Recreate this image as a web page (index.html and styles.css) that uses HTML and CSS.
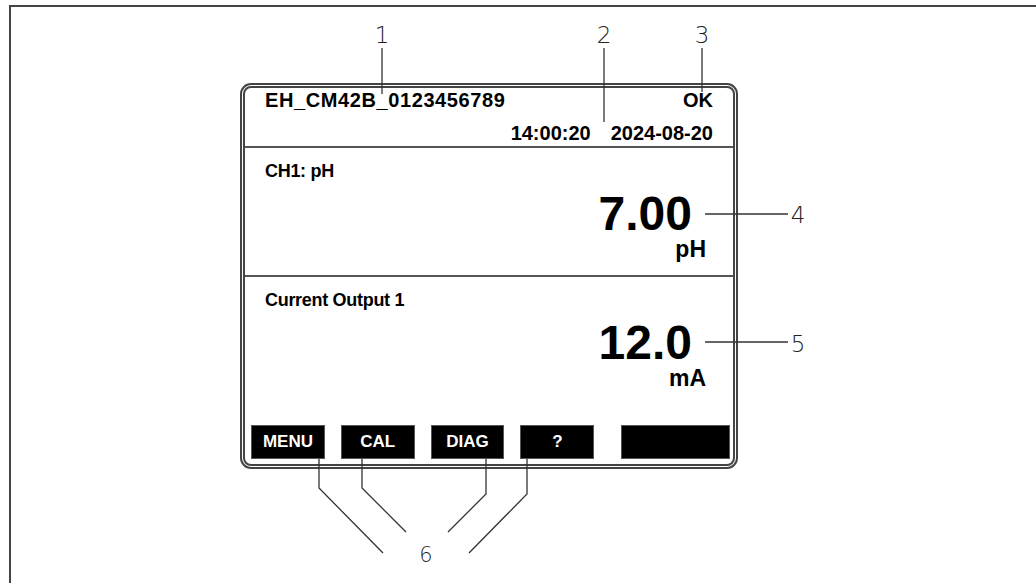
FILE: index.html
```html
<!DOCTYPE html>
<html lang="en">
<head>
    <meta charset="UTF-8">
    <title>Display overview</title>
    <link rel="stylesheet" href="styles.css">
</head>
<body>

    <div class="sheet">
        <div class="display">
            <div class="display-head">
                <div class="head-row">
                    <span class="device-tag">EH_CM42B_0123456789</span>
                    <span>OK</span>
                </div>
                <div class="head-row head-time">
                    <span>14:00:20</span>
                    <span>2024-08-20</span>
                </div>
            </div>

            <div class="channel">
                <div class="channel-title">CH1: pH</div>
                <div class="channel-value">7.00</div>
                <div class="channel-unit">pH</div>
            </div>

            <div class="channel channel-last">
                <div class="channel-title">Current Output 1</div>
                <div class="channel-value">12.0</div>
                <div class="channel-unit">mA</div>
            </div>

            <div class="softkeys">
                <div class="key">MENU</div>
                <div class="key">CAL</div>
                <div class="key">DIAG</div>
                <div class="key">?</div>
                <div class="key key-blank"></div>
            </div>
        </div>
    </div>

    <!-- Callouts -->
    <svg class="callouts" width="1036" height="585" viewBox="0 0 1036 585">
        <g class="lines">
            <line x1="382" y1="48" x2="382" y2="94" />
            <line x1="604" y1="48" x2="604" y2="122" />
            <line x1="702" y1="48" x2="702" y2="92" />
            <line x1="705" y1="214" x2="788" y2="214" />
            <line x1="705" y1="342" x2="788" y2="342" />
            <polyline points="319,459 319,488 383,553" />
            <polyline points="362,459 362,488 406,532" />
            <polyline points="486,459 486,494 448,532" />
            <polyline points="527,459 527,494 469,553" />
        </g>
        <g class="labels">
            <text x="382" y="43">1</text>
            <text x="604" y="43">2</text>
            <text x="702" y="43">3</text>
            <text x="798" y="223">4</text>
            <text x="798" y="352">5</text>
            <text class="wide" x="426" y="562">6</text>
        </g>
    </svg>

</body>
</html>
```

FILE: styles.css
```css
body {
    margin: 0;
    background-color: #fff;
    font-family: 'Liberation Sans', Arial, sans-serif;
    color: #000;
    overflow: hidden;
}

.sheet {
    margin: 5px 0 0 9px;
    height: 578px;
    box-sizing: border-box;
    border-top: 2px solid #444;
    border-left: 2px solid #444;
    padding: 76px 0 0 229px;
}

.display {
    width: 498px;
    height: 386px;
    box-sizing: border-box;
    border: 5px double #444;
    border-radius: 11px;
    display: flex;
    flex-direction: column;
}

.display-head {
    height: 60px;
    box-sizing: border-box;
    padding: 2px 20px 0 20px;
    border-bottom: 2px solid #555;
    font-size: 20px;
    font-weight: bold;
    line-height: 20px;
}

.device-tag {
    letter-spacing: 0.6px;
}

.head-row {
    display: flex;
    justify-content: space-between;
}

.head-time {
    justify-content: flex-end;
    gap: 20px;
    margin-top: 13px;
}

.channel {
    height: 129px;
    box-sizing: border-box;
    padding: 14px 27px 0 20px;
    border-bottom: 2px solid #555;
    display: flex;
    flex-direction: column;
}

.channel-last {
    border-bottom: none;
    height: 138px;
}

.channel-title {
    font-size: 18px;
    font-weight: bold;
    line-height: 19px;
    letter-spacing: -0.3px;
}

.channel-value {
    align-self: flex-end;
    margin: 9px 14px 0 0;
    font-size: 48px;
    font-weight: bold;
    line-height: 48px;
}

.channel-unit {
    align-self: flex-end;
    font-size: 23px;
    font-weight: bold;
    line-height: 23px;
}

.softkeys {
    margin-top: auto;
    margin-bottom: 5px;
    padding: 0 3px 0 6px;
    display: flex;
}

.key {
    width: 74px;
    height: 34px;
    box-sizing: border-box;
    margin-right: 16px;
    background-color: #000;
    border: 1px solid #555;
    color: #fff;
    font-size: 17px;
    font-weight: bold;
    display: flex;
    align-items: center;
    justify-content: center;
}

.key:nth-child(4) {
    margin-right: 27px;
}

.key-blank {
    width: 109px;
    margin-right: 0;
}

.callouts {
    position: absolute;
    top: 0;
    left: 0;
    pointer-events: none;
}

.callouts .lines line,
.callouts .lines polyline {
    stroke: #333;
    stroke-width: 1.3;
    fill: none;
}

.callouts .labels text {
    font-family: 'DejaVu Sans', sans-serif;
    font-weight: 200;
    font-stretch: condensed;
    font-size: 23px;
    fill: #222;
    text-anchor: middle;
}

.callouts .labels .wide {
    font-stretch: normal;
    font-size: 21px;
}
```
